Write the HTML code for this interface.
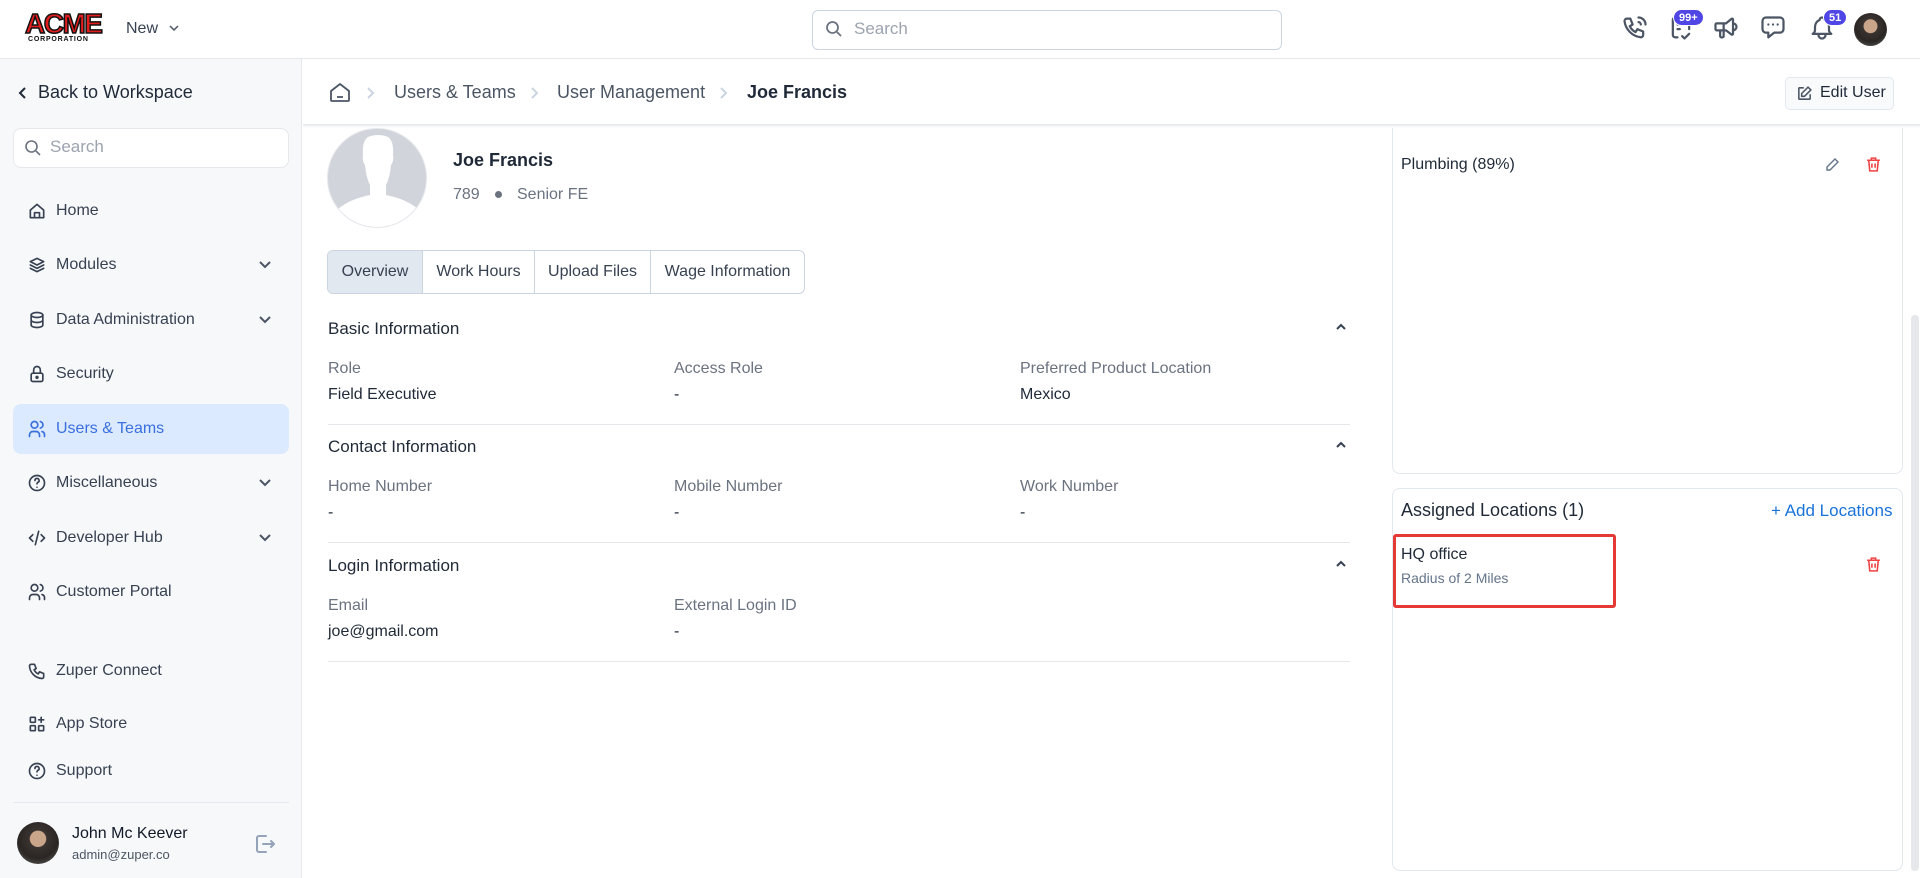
<!DOCTYPE html>
<html><head><meta charset="utf-8"><style>
*{box-sizing:border-box;margin:0;padding:0}
body{width:1920px;height:878px;overflow:hidden;background:#fff;font-family:"Liberation Sans",sans-serif;color:#1f2937;position:relative}
.a{position:absolute}
.side{left:0;top:59px;width:302px;height:819px;background:#f7f8fa;border-right:1px solid #e5e7eb}
.nav{position:absolute;left:27px;font-size:16px;color:#374151;display:flex;align-items:center;gap:9px;height:24px}
.nav svg{width:20px;height:20px;fill:none;stroke:#374151;stroke-width:2;stroke-linecap:round;stroke-linejoin:round}
.chev{position:absolute;left:258px;width:14px;height:14px;fill:none;stroke:#4b5563;stroke-width:2}
.lbl{position:absolute;font-size:16px;color:#6b7280}
.val{position:absolute;font-size:16px;color:#1f2937}
.sec{position:absolute;left:328px;font-size:17px;color:#1f2937}
.hr{position:absolute;left:328px;width:1022px;height:1px;background:#e5e7eb}
.up{position:absolute;left:1335px;width:12px;height:12px;fill:none;stroke:#374151;stroke-width:2}
.hi{position:absolute;top:14px;width:28px;height:28px;fill:none;stroke:#4b5563;stroke-width:1.9;stroke-linecap:round;stroke-linejoin:round}
.badge{position:absolute;background:#4f46e5;color:#fff;font-size:11px;font-weight:bold;border-radius:9px;height:17px;line-height:17px;padding:0 5px;border:1px solid #fff}
</style></head><body>
<!-- header -->
<div class="a" style="left:0;top:0;width:1920px;height:59px;border-bottom:1px solid #e5e7eb;background:#fff"></div>
<div class="a" style="left:25px;top:11px;font:900 28px/26px 'Liberation Sans',sans-serif;color:#e11d1d;letter-spacing:-1.5px;-webkit-text-stroke:1.5px #111">ACME</div>
<div class="a" style="left:28px;top:36px;font:bold 7px 'Liberation Sans',sans-serif;color:#111;letter-spacing:0.8px">CORPORATION</div>
<div class="a" style="left:126px;top:20px;font-size:16px;color:#374151">New</div>
<svg class="a" style="left:168px;top:23px" width="12" height="10" viewBox="0 0 12 10"><path d="M2 3l4 4 4-4" fill="none" stroke="#4b5563" stroke-width="1.5"/></svg>
<div class="a" style="left:812px;top:10px;width:470px;height:40px;border:1px solid #cbd5e1;border-radius:6px;background:#fff"></div>
<svg class="a" style="left:824px;top:19px" width="20" height="20" viewBox="0 0 20 20"><circle cx="8.5" cy="8.5" r="5.5" fill="none" stroke="#6b7280" stroke-width="1.8"/><path d="M13 13l4 4" stroke="#6b7280" stroke-width="1.8"/></svg>
<div class="a" style="left:854px;top:19px;font-size:17px;color:#9ca3af">Search</div>
<svg class="hi" style="left:1621px" viewBox="0 0 24 24"><path d="M5 4h3l2 5-2.5 1.5a11 11 0 0 0 5 5L14 13l5 2v3a2 2 0 0 1-2 2A16 16 0 0 1 3 6a2 2 0 0 1 2-2"/><path d="M15 3a6 6 0 0 1 6 6M15 7a2 2 0 0 1 2 2"/></svg>
<svg class="hi" style="left:1667px" viewBox="0 0 24 24"><path d="M9 20H7a2 2 0 0 1-2-2V5a2 2 0 0 1 2-2h10a2 2 0 0 1 2 2v8M9 9h2M9 13h2M13 19l2 2 4-4"/></svg>
<div class="badge" style="left:1673px;top:9px">99+</div>
<svg class="hi" style="left:1712px" viewBox="0 0 24 24"><path d="M18 8a3 3 0 0 1 0 6M10 8v11a1 1 0 0 1-1 1H8a1 1 0 0 1-1-1v-5M12 8l4.7-3.8A.8.8 0 0 1 18 5v12a.8.8 0 0 1-1.3.6L12 14H4a1 1 0 0 1-1-1V9a1 1 0 0 1 1-1h8"/></svg>
<svg class="hi" style="left:1759px" viewBox="0 0 24 24"><path d="M8 9h.01M12 9h.01M16 9h.01M18 3a3 3 0 0 1 3 3v7a3 3 0 0 1-3 3h-5l-5 4v-4H6a3 3 0 0 1-3-3V6a3 3 0 0 1 3-3z"/></svg>
<svg class="hi" style="left:1808px" viewBox="0 0 24 24"><path d="M10 5a2 2 0 1 1 4 0 7 7 0 0 1 4 6v3a4 4 0 0 0 2 3H4a4 4 0 0 0 2-3v-3a7 7 0 0 1 4-6M9 17v1a3 3 0 0 0 6 0v-1"/></svg>
<div class="badge" style="left:1823px;top:9px">51</div>
<div class="a" style="left:1854px;top:13px;width:33px;height:33px;border-radius:50%;background:radial-gradient(circle at 50% 40%,#c9a58a 0 26%,#3a3330 28%,#2a2624 60%,#6b6a66 100%)"></div>

<!-- sidebar -->
<div class="a side"></div>
<svg class="a" style="left:16px;top:85px" width="14" height="16" viewBox="0 0 14 16"><path d="M9 3L4 8l5 5" fill="none" stroke="#1f2937" stroke-width="2"/></svg>
<div class="a" style="left:38px;top:82px;font-size:18px;color:#1f2937">Back to Workspace</div>
<div class="a" style="left:13px;top:128px;width:276px;height:40px;border:1px solid #e5e7eb;border-radius:8px;background:#fff"></div>
<svg class="a" style="left:23px;top:138px" width="20" height="20" viewBox="0 0 20 20"><circle cx="8.5" cy="8.5" r="5.5" fill="none" stroke="#6b7280" stroke-width="1.6"/><path d="M13 13l4 4" stroke="#6b7280" stroke-width="1.6"/></svg>
<div class="a" style="left:50px;top:137px;font-size:17px;color:#9ca3af">Search</div>
<div class="a" style="left:13px;top:404px;width:276px;height:50px;border-radius:8px;background:#dbeafe"></div>

<div class="nav" style="top:199px"><svg viewBox="0 0 24 24"><path d="M4 11l8-7 8 7v9H4zM9 20v-6h6v6"/></svg>Home</div>
<div class="nav" style="top:253px"><svg viewBox="0 0 24 24"><path d="M12 4l8 4-8 4-8-4zM4 12l8 4 8-4M4 16l8 4 8-4"/></svg>Modules</div>
<svg class="chev" style="top:258px" viewBox="0 0 14 14"><path d="M2 4l5 5 5-5"/></svg>
<div class="nav" style="top:308px"><svg viewBox="0 0 24 24"><ellipse cx="12" cy="6" rx="7" ry="3"/><path d="M5 6v12c0 1.7 3 3 7 3s7-1.3 7-3V6M5 12c0 1.7 3 3 7 3s7-1.3 7-3"/></svg>Data Administration</div>
<svg class="chev" style="top:313px" viewBox="0 0 14 14"><path d="M2 4l5 5 5-5"/></svg>
<div class="nav" style="top:362px"><svg viewBox="0 0 24 24"><rect x="5" y="11" width="14" height="10" rx="2"/><path d="M8 11V7a4 4 0 0 1 8 0v4"/><circle cx="12" cy="16" r="1"/></svg>Security</div>
<div class="nav" style="top:417px;color:#3b6fe0"><svg viewBox="0 0 24 24" style="stroke:#3b6fe0"><circle cx="9" cy="7" r="4"/><path d="M3 21v-2a4 4 0 0 1 4-4h4a4 4 0 0 1 4 4v2M16 3.1a4 4 0 0 1 0 7.8M21 21v-2a4 4 0 0 0-3-3.9"/></svg>Users &amp; Teams</div>
<div class="nav" style="top:471px"><svg viewBox="0 0 24 24"><circle cx="12" cy="12" r="9"/><path d="M9.5 9a2.5 2.5 0 1 1 3.5 2.3c-.7.3-1 1-1 1.7M12 17h.01"/></svg>Miscellaneous</div>
<svg class="chev" style="top:476px" viewBox="0 0 14 14"><path d="M2 4l5 5 5-5"/></svg>
<div class="nav" style="top:526px"><svg viewBox="0 0 24 24"><path d="M7 8l-4 4 4 4M17 8l4 4-4 4M14 4l-4 16"/></svg>Developer Hub</div>
<svg class="chev" style="top:531px" viewBox="0 0 14 14"><path d="M2 4l5 5 5-5"/></svg>
<div class="nav" style="top:580px"><svg viewBox="0 0 24 24"><circle cx="9" cy="7" r="4"/><path d="M3 21v-2a4 4 0 0 1 4-4h4a4 4 0 0 1 4 4v2M16 3.1a4 4 0 0 1 0 7.8M21 21v-2a4 4 0 0 0-3-3.9"/></svg>Customer Portal</div>
<div class="nav" style="top:659px"><svg viewBox="0 0 24 24"><path d="M5 4h4l2 5-2.5 1.5a11 11 0 0 0 5 5L15 13l5 2v4a2 2 0 0 1-2 2A16 16 0 0 1 3 6a2 2 0 0 1 2-2"/></svg>Zuper Connect</div>
<div class="nav" style="top:712px"><svg viewBox="0 0 24 24"><rect x="4" y="4" width="6" height="6" rx="1"/><rect x="4" y="14" width="6" height="6" rx="1"/><rect x="14" y="14" width="6" height="6" rx="1"/><path d="M14 7h6M17 4v6"/></svg>App Store</div>
<div class="nav" style="top:759px"><svg viewBox="0 0 24 24"><circle cx="12" cy="12" r="9"/><path d="M9.5 9a2.5 2.5 0 1 1 3.5 2.3c-.7.3-1 1-1 1.7M12 17h.01"/></svg>Support</div>
<div class="a" style="left:13px;top:802px;width:276px;height:1px;background:#e2e8f0"></div>
<div class="a" style="left:17px;top:822px;width:42px;height:42px;border-radius:50%;background:radial-gradient(circle at 50% 40%,#c9a58a 0 24%,#3a3330 26%,#2a2624 60%,#6b6a66 100%)"></div>
<div class="a" style="left:72px;top:825px;font-size:16px;color:#111827">John Mc Keever</div>
<div class="a" style="left:72px;top:847px;font-size:13px;color:#4b5563">admin@zuper.co</div>
<svg class="a" style="left:253px;top:832px" width="24" height="24" viewBox="0 0 24 24"><path d="M13 4H6a2 2 0 0 0-2 2v12a2 2 0 0 0 2 2h7M10 12h11M18 9l3 3-3 3" fill="none" stroke="#94a3b8" stroke-width="2" stroke-linecap="round" stroke-linejoin="round"/></svg>

<!-- right cards -->
<div class="a" style="left:1392px;top:110px;width:511px;height:364px;border:1px solid #e2e8f0;border-radius:8px;border-top:none"></div>
<div class="a" style="left:303px;top:60px;width:1617px;height:65px;background:#fff"></div>

<!-- breadcrumb -->
<div class="a" style="left:303px;top:124px;width:1617px;height:4px;background:linear-gradient(#e5e7eb,#fff)"></div>
<svg class="a" style="left:329px;top:81px" width="22" height="22" viewBox="0 0 22 22"><path d="M2 10l9-7 9 7v9a1 1 0 0 1-1 1H3a1 1 0 0 1-1-1z M8 16h6" fill="none" stroke="#4b5563" stroke-width="1.8" stroke-linejoin="round"/></svg>
<svg class="a" style="left:366px;top:86px" width="10" height="14" viewBox="0 0 10 14"><path d="M2 2l5 5-5 5" fill="none" stroke="#cbd5e1" stroke-width="2"/></svg>
<div class="a" style="left:394px;top:82px;font-size:18px;color:#4b5563">Users &amp; Teams</div>
<svg class="a" style="left:530px;top:86px" width="10" height="14" viewBox="0 0 10 14"><path d="M2 2l5 5-5 5" fill="none" stroke="#cbd5e1" stroke-width="2"/></svg>
<div class="a" style="left:557px;top:82px;font-size:18px;color:#4b5563">User Management</div>
<svg class="a" style="left:719px;top:86px" width="10" height="14" viewBox="0 0 10 14"><path d="M2 2l5 5-5 5" fill="none" stroke="#cbd5e1" stroke-width="2"/></svg>
<div class="a" style="left:747px;top:82px;font-size:18px;font-weight:bold;color:#1f2937">Joe Francis</div>
<div class="a" style="left:1785px;top:77px;width:109px;height:33px;border:1px solid #e2e8f0;border-radius:5px;background:#f8fafc"></div>
<svg class="a" style="left:1796px;top:85px" width="17" height="17" viewBox="0 0 24 24"><path d="M11 4H5a1 1 0 0 0-1 1v14a1 1 0 0 0 1 1h14a1 1 0 0 0 1-1v-6M17 3l4 4-9 9H8v-4z" fill="none" stroke="#4b5563" stroke-width="2.2" stroke-linejoin="round"/></svg>
<div class="a" style="left:1820px;top:84px;font-size:16px;color:#1f2937">Edit User</div>

<!-- profile -->
<div class="a" style="left:327px;top:128px;width:100px;height:100px;border-radius:50%;background:#d1d5db;overflow:hidden;border:1px solid #e5e7eb">
<svg width="100" height="100" viewBox="0 0 100 100"><path d="M40 8 Q50 4 60 8 Q66 12 65 26 Q66 32 63 36 Q62 48 58 56 L58 66 Q78 70 90 80 L90 100 H10 L10 80 Q22 70 42 66 L42 56 Q38 48 37 36 Q34 32 35 26 Q34 12 40 8z" fill="#fff"/></svg></div>
<div class="a" style="left:453px;top:150px;font-size:18px;font-weight:bold;color:#1f2937">Joe Francis</div>
<div class="a" style="left:453px;top:186px;font-size:16px;color:#6b7280">789</div>
<div class="a" style="left:495px;top:191px;width:7px;height:7px;border-radius:50%;background:#6b7280"></div>
<div class="a" style="left:517px;top:186px;font-size:16px;color:#6b7280">Senior FE</div>

<!-- tabs -->
<div class="a" style="left:327px;top:250px;width:478px;height:44px;border:1px solid #cbd5e1;border-radius:6px;overflow:hidden;display:flex;font-size:16px;color:#374151">
<div style="width:95px;background:#e2e8f0;border-right:1px solid #cbd5e1;line-height:42px;text-align:center">Overview</div>
<div style="width:112px;border-right:1px solid #cbd5e1;line-height:42px;text-align:center">Work Hours</div>
<div style="width:116px;border-right:1px solid #cbd5e1;line-height:42px;text-align:center">Upload Files</div>
<div style="flex:1;line-height:42px;text-align:center">Wage Information</div></div>

<div class="sec" style="top:319px">Basic Information</div>
<svg class="up" style="top:321px" viewBox="0 0 12 12"><path d="M2 8l4-4 4 4"/></svg>
<div class="lbl" style="left:328px;top:360px">Role</div><div class="val" style="left:328px;top:386px">Field Executive</div>
<div class="lbl" style="left:674px;top:360px">Access Role</div><div class="val" style="left:674px;top:386px">-</div>
<div class="lbl" style="left:1020px;top:360px">Preferred Product Location</div><div class="val" style="left:1020px;top:386px">Mexico</div>
<div class="hr" style="top:424px"></div>
<div class="sec" style="top:437px">Contact Information</div>
<svg class="up" style="top:439px" viewBox="0 0 12 12"><path d="M2 8l4-4 4 4"/></svg>
<div class="lbl" style="left:328px;top:478px">Home Number</div><div class="val" style="left:328px;top:504px">-</div>
<div class="lbl" style="left:674px;top:478px">Mobile Number</div><div class="val" style="left:674px;top:504px">-</div>
<div class="lbl" style="left:1020px;top:478px">Work Number</div><div class="val" style="left:1020px;top:504px">-</div>
<div class="hr" style="top:542px"></div>
<div class="sec" style="top:556px">Login Information</div>
<svg class="up" style="top:558px" viewBox="0 0 12 12"><path d="M2 8l4-4 4 4"/></svg>
<div class="lbl" style="left:328px;top:597px">Email</div><div class="val" style="left:328px;top:623px">joe@gmail.com</div>
<div class="lbl" style="left:674px;top:597px">External Login ID</div><div class="val" style="left:674px;top:623px">-</div>
<div class="hr" style="top:661px"></div>

<!-- right content -->
<div class="a" style="left:1401px;top:156px;font-size:16px;color:#1f2937">Plumbing (89%)</div>
<svg class="a" style="left:1824px;top:157px" width="16" height="16" viewBox="0 0 16 16"><path d="M11 2l3 3-8 8H3v-3z" fill="none" stroke="#64748b" stroke-width="1.4"/></svg>
<svg class="a" style="left:1865px;top:156px" width="17" height="17" viewBox="0 0 16 16"><path d="M2 4h12M6 4V2h4v2M3.5 4l1 10h7l1-10M6.5 7v4M9.5 7v4" fill="none" stroke="#ef4444" stroke-width="1.5"/></svg>
<div class="a" style="left:1392px;top:488px;width:511px;height:383px;border:1px solid #e2e8f0;border-radius:8px"></div>
<div class="a" style="left:1401px;top:500px;font-size:18px;color:#1f2937">Assigned Locations (1)</div>
<div class="a" style="left:1771px;top:501px;font-size:17px;color:#1a73d9">+ Add Locations</div>
<div class="a" style="left:1393px;top:534px;width:223px;height:74px;border:3px solid #e53935;border-radius:3px"></div>
<div class="a" style="left:1401px;top:546px;font-size:16px;color:#1f2937">HQ office</div>
<div class="a" style="left:1401px;top:570px;font-size:14px;color:#64748b">Radius of 2 Miles</div>
<svg class="a" style="left:1865px;top:556px" width="17" height="17" viewBox="0 0 16 16"><path d="M2 4h12M6 4V2h4v2M3.5 4l1 10h7l1-10M6.5 7v4M9.5 7v4" fill="none" stroke="#ef4444" stroke-width="1.5"/></svg>
<div class="a" style="left:1911px;top:315px;width:8px;height:556px;border-radius:4px;background:#e5e7eb"></div>
</body></html>
